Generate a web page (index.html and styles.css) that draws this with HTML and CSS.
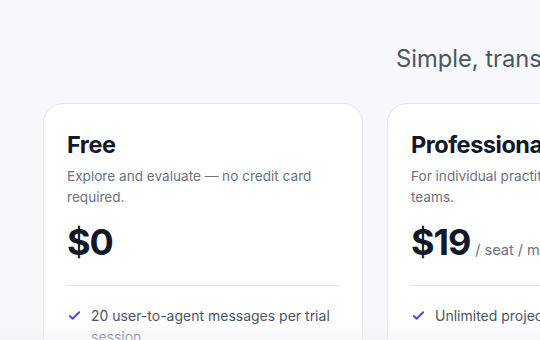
FILE: index.html
```html
<!DOCTYPE html>
<html lang="en">
<head>
<meta charset="utf-8">
<title>Pricing</title>
<link rel="stylesheet" href="styles.css">
</head>
<body>
<main class="page">
  <h2 class="heading">Simple, transparent pricing</h2>
  <div class="plans">
    <section class="card">
      <h3 class="plan-name">Free</h3>
      <p class="plan-desc">Explore and evaluate — no credit card required.</p>
      <div class="price"><span class="amount">$0</span></div>
      <hr class="divider">
      <ul class="features">
        <li><svg class="check" viewBox="0 0 16 16"><path d="M3 8.5l3 3 7-7" fill="none" stroke="currentColor" stroke-width="2" stroke-linecap="round" stroke-linejoin="round"/></svg><span>20 user-to-agent messages per trial session</span></li>
        <li><svg class="check" viewBox="0 0 16 16"><path d="M3 8.5l3 3 7-7" fill="none" stroke="currentColor" stroke-width="2" stroke-linecap="round" stroke-linejoin="round"/></svg><span>Community support</span></li>
      </ul>
    </section>
    <section class="card">
      <h3 class="plan-name">Professional</h3>
      <p class="plan-desc">For individual practitioners and small teams.</p>
      <div class="price"><span class="amount">$19</span><span class="unit">/ seat / month</span></div>
      <hr class="divider">
      <ul class="features">
        <li><svg class="check" viewBox="0 0 16 16"><path d="M3 8.5l3 3 7-7" fill="none" stroke="currentColor" stroke-width="2" stroke-linecap="round" stroke-linejoin="round"/></svg><span>Unlimited projects</span></li>
        <li><svg class="check" viewBox="0 0 16 16"><path d="M3 8.5l3 3 7-7" fill="none" stroke="currentColor" stroke-width="2" stroke-linecap="round" stroke-linejoin="round"/></svg><span>Priority support</span></li>
      </ul>
    </section>
    <section class="card">
      <h3 class="plan-name">Enterprise</h3>
      <p class="plan-desc">For organizations with advanced needs.</p>
      <div class="price"><span class="amount">Custom</span></div>
      <hr class="divider">
      <ul class="features">
        <li><svg class="check" viewBox="0 0 16 16"><path d="M3 8.5l3 3 7-7" fill="none" stroke="currentColor" stroke-width="2" stroke-linecap="round" stroke-linejoin="round"/></svg><span>SSO and audit logs</span></li>
      </ul>
    </section>
  </div>
</main>
<div class="fade"></div>
</body>
</html>
```
FILE: styles.css
```css
html, body {
  margin: 0;
  padding: 0;
  background: #f7f8fb;
  overflow: hidden;
  font-family: Inter, "Noto Sans", sans-serif;
}
.page {
  width: 1008px;
  padding: 43px 0 0 43px;
}
.heading {
  margin: 0 0 28px;
  text-align: center;
  font-size: 23.7px;
  line-height: 32px;
  font-weight: 400;
  color: #4b5563;
}
.plans {
  display: grid;
  grid-template-columns: repeat(3, 320px);
  gap: 24px;
}
.card {
  background: #fff;
  border: 1px solid #e5e7eb;
  border-radius: 20px;
  padding: 26px 23px 24px;
  box-sizing: border-box;
}
.plan-name {
  margin: 0;
  font-size: 23.5px;
  line-height: 30px;
  font-weight: 700;
  color: #111827;
  letter-spacing: -0.02em;
}
.plan-desc {
  margin: 6px 0 0;
  font-size: 13.6px;
  line-height: 21px;
  color: #6b7280;
}
.price {
  margin-top: 14px;
  display: flex;
  align-items: baseline;
  gap: 5px;
}
.amount {
  font-size: 36px;
  line-height: 40px;
  font-weight: 700;
  color: #111827;
  letter-spacing: -0.03em;
}
.unit {
  font-size: 14.5px;
  color: #6b7280;
}
.divider {
  margin: 23px 0 0;
  border: 0;
  border-top: 1px solid #e5e7eb;
}
.features {
  list-style: none;
  margin: 19px 0 0;
  padding: 0;
}
.features li {
  display: flex;
  gap: 9px;
  font-size: 14px;
  line-height: 21px;
  color: #4b5563;
  margin-bottom: 10px;
}
.check {
  width: 15px;
  height: 15px;
  flex: none;
  margin-top: 3px;
  color: #5046e5;
}
.fade {
  position: fixed;
  left: 0;
  right: 0;
  bottom: 0;
  height: 16px;
  background: linear-gradient(to bottom, rgba(243,244,248,0), rgba(240,241,246,0.6));
}
```
